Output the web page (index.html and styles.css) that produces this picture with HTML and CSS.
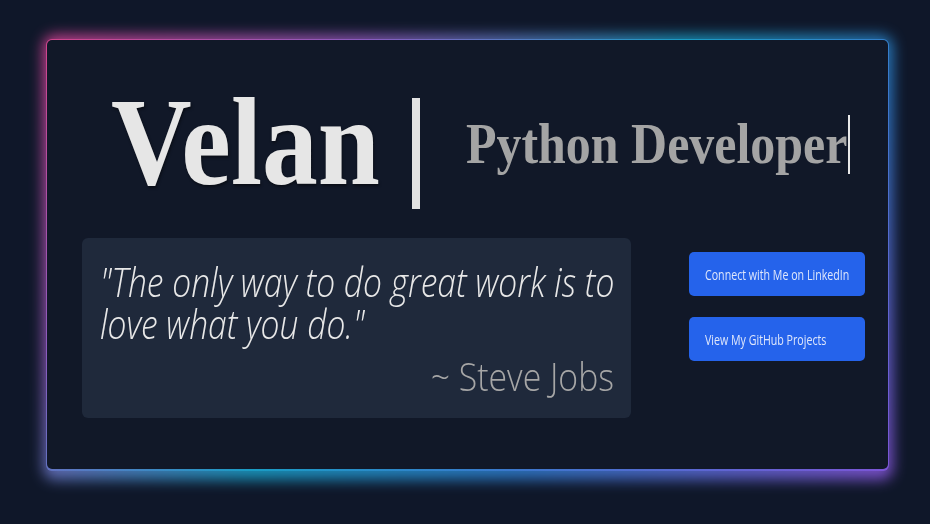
FILE: index.html
```html
<!DOCTYPE html>
<html lang="en">
<head>
<meta charset="utf-8">
<title>Velan | Python Developer</title>
<link rel="stylesheet" href="styles.css">
</head>
<body>
<main class="card">
  <header class="hero">
    <h1 class="name"><span class="name-text">Velan</span></h1>
    <div class="divider"></div>
    <h2 class="role"><span class="role-text">Python Developer</span></h2>
    <div class="cursor"></div>
  </header>
  <section class="content">
    <blockquote class="quote">
      <p class="quote-text">"The only way to do great work is to<br>love what you do."</p>
      <p class="quote-author"><span class="author-text">~ Steve Jobs</span></p>
    </blockquote>
    <nav class="links">
      <a class="btn" href="#"><span class="btn-text">Connect with Me on LinkedIn</span></a>
      <a class="btn" href="#"><span class="btn-text">View My GitHub Projects</span></a>
    </nav>
  </section>
</main>
</body>
</html>
```
FILE: styles.css
```css
html {
  background: #0f1729;
}

html, body {
  margin: 0;
  padding: 0;
  width: 930px;
  height: 524px;
  overflow: hidden;
}

body {
  font-family: "Open Sans", "Noto Sans", sans-serif;
}

.card {
  position: relative;
  box-sizing: border-box;
  width: 841px;
  height: 429px;
  margin: 40px 0 0 47px;
  background: #111828;
  border-radius: 5px;
  display: flex;
  flex-direction: column;
}

.card::before {
  content: "";
  position: absolute;
  top: -5px;
  left: -4px;
  right: -5px;
  bottom: -11px;
  border-radius: 12px;
  background: linear-gradient(135deg, #e2449a 0%, #9a5cc0 25%, #1aa3cc 50%, #2f7fd0 70%, #8a55dc 100%);
  filter: blur(7px);
  opacity: 0.85;
  z-index: -1;
}

.card::after {
  content: "";
  position: absolute;
  inset: -1px -1px -2px -1px;
  border-radius: 6px;
  background: linear-gradient(135deg, #d1458c 0%, #8a5cc0 25%, #1a9cc4 50%, #3a78cc 70%, #7c55d6 100%);
  z-index: -1;
}

.hero {
  display: flex;
  align-items: flex-start;
  height: 169px;
  padding-left: 64px;
}

.name {
  margin: 41px 0 0 0;
  width: 266px;
  font-family: "Liberation Serif", serif;
  font-weight: 700;
  font-size: 124px;
  line-height: 124px;
  color: #e6e6e6;
  white-space: nowrap;
}

.name-text {
  display: inline-block;
  transform: scaleX(0.9);
  transform-origin: left center;
  text-shadow: 1px 2px 3px rgba(0, 0, 0, 0.45);
}

.divider {
  margin: 58px 0 0 35px;
  width: 8px;
  height: 111px;
  background: #e2e2e2;
}

.role {
  margin: 75px 0 0 46px;
  width: 382px;
  font-family: "Liberation Serif", serif;
  font-weight: 700;
  font-size: 57px;
  line-height: 57px;
  color: #a4a4a4;
  white-space: nowrap;
}

.role-text {
  display: inline-block;
  transform: scaleX(0.876);
  transform-origin: left center;
}

.cursor {
  margin-top: 75px;
  width: 2px;
  height: 59px;
  background: #e8e8e8;
}

.content {
  display: flex;
  align-items: flex-start;
  margin-top: 29px;
  padding-left: 35px;
}

.quote {
  box-sizing: border-box;
  margin: 0;
  width: 549px;
  height: 180px;
  padding: 23px 17px 23px 18px;
  background: #1f293b;
  border-radius: 6px;
}

.quote-text {
  margin: 0;
  font-style: italic;
  font-weight: 300;
  font-size: 40px;
  line-height: 42px;
  color: #e8e8e8;
  white-space: nowrap;
  transform: scaleX(0.84);
  transform-origin: left top;
}

.quote-author {
  margin: 12px 0 0 0;
  text-align: right;
  font-weight: 300;
  font-size: 38px;
  line-height: 38px;
  color: #a6a6a6;
  white-space: nowrap;
}

.author-text {
  display: inline-block;
  transform: scaleX(0.89);
  transform-origin: right center;
}

.links {
  display: flex;
  flex-direction: column;
  gap: 21px;
  margin: 14px 0 0 58px;
}

.btn {
  box-sizing: border-box;
  display: flex;
  align-items: center;
  width: 176px;
  height: 44px;
  padding-left: 16px;
  background: #2563eb;
  border-radius: 5px;
  color: #dfe7fb;
  font-size: 15px;
  text-decoration: none;
  white-space: nowrap;
}

.btn-text {
  display: inline-block;
  transform: scaleX(0.71);
  transform-origin: left center;
}
```
